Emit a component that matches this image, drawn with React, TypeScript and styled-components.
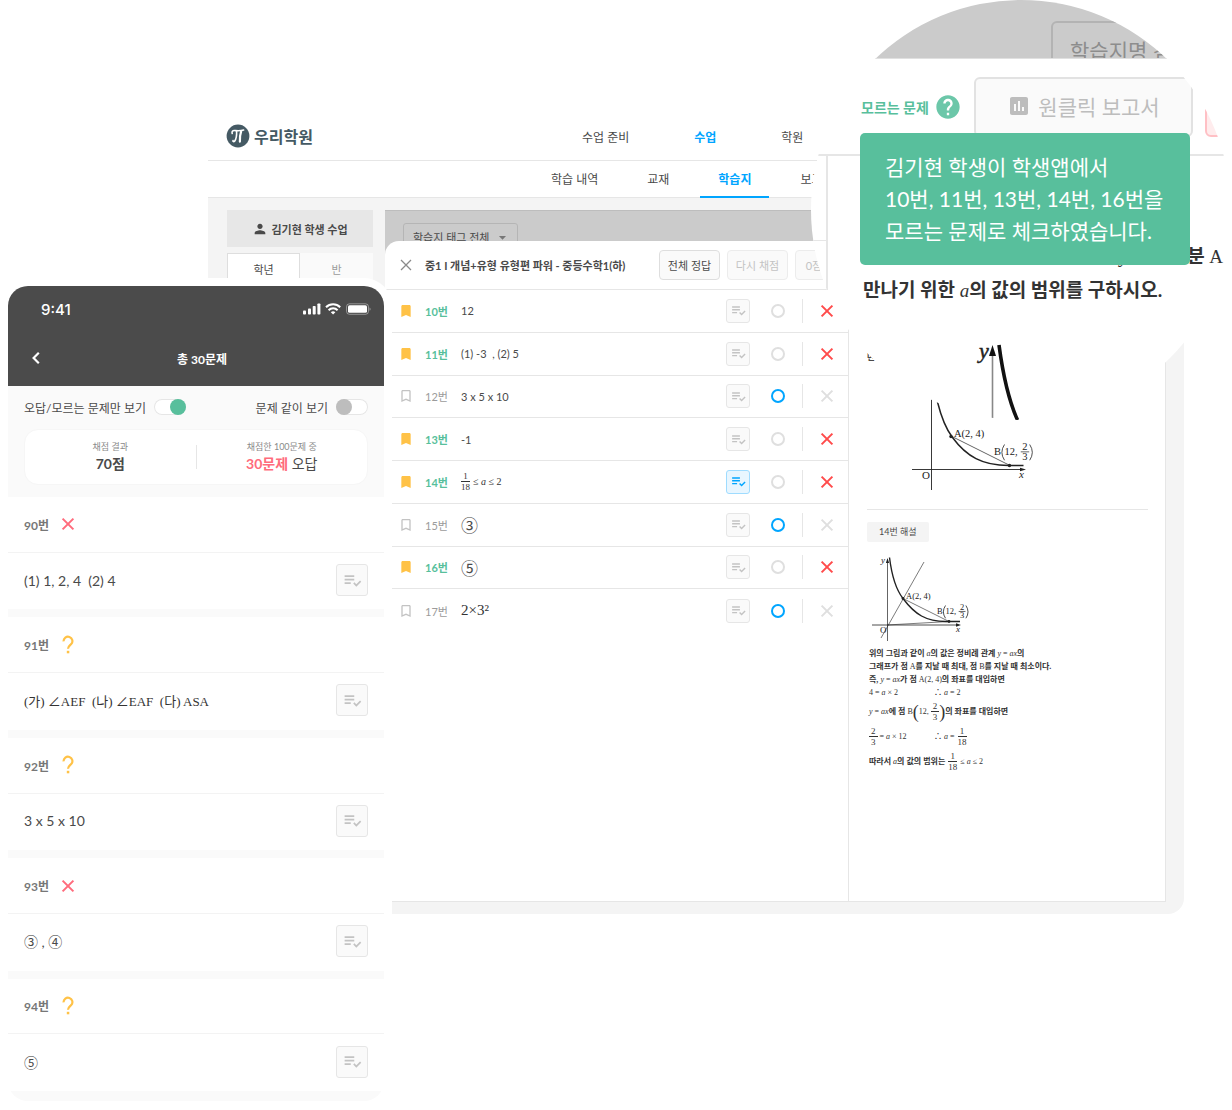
import React from "react";
import styled, { createGlobalStyle, css } from "styled-components";
import {
  MdArrowDropDown,
  MdAssessment,
  MdBookmark,
  MdBookmarkBorder,
  MdHelp,
  MdPerson,
  MdPlaylistAddCheck,
} from "react-icons/md";

const sans = `Lato, "Noto Sans CJK KR", sans-serif`;
const serif = `"Liberation Serif", "Noto Sans CJK KR", serif`;

const color = {
  text: "#4a4a4a",
  muted: "#9b9b9b",
  faint: "#c3c3c3",
  line: "#e6e6e6",
  page: "#f4f4f4",
  soft: "#fafafa",
  dim: "#cbcbcb",
  green: "#58bf9c",
  blue: "#00a5ff",
  red: "#ff4b4b",
  pink: "#ff6b7c",
  yellow: "#ffc247",
  dark: "#4b4b4b",
  brand: "#455a64",
};

const GlobalStyle = createGlobalStyle`
  *, *::before, *::after { box-sizing: border-box; }
  body { margin: 0; background: #fff; color: ${color.text}; font-family: ${sans}; }
  button, select, input { font: inherit; color: inherit; margin: 0; padding: 0; }
  button { cursor: pointer; }
  a { color: inherit; text-decoration: none; }
  h1, h2, h3, p, ul, ol { margin: 0; padding: 0; font-weight: inherit; }
  ul, ol { list-style: none; }
  svg { display: block; flex: none; }
`;

/* The showcase: desktop window, phone and magnifier overlapping each other */

const Showcase = styled.main`
  position: relative;
  display: grid;
  grid-template-columns: 200px 176px minmax(0, 1fr);
  grid-template-rows: 176px auto;
  padding: 110px 48px 9px 8px;
  overflow: hidden;
`;

/* ---------- desktop window ---------- */

const Desktop = styled.section`
  grid-column: 2 / -1;
  grid-row: 1 / 3;
  align-self: start;
  border-bottom-right-radius: 16px;
  background: ${color.page};
  overflow: hidden;
`;

const TopBar = styled.header`
  display: flex;
  align-items: center;
  height: 51px;
  padding-left: 18px;
  padding-top: 2px;
  background: #fff;
  border-bottom: 1px solid ${color.line};
`;

const Brand = styled.a`
  display: flex;
  align-items: center;
  gap: 4px;
  width: 356px;
  font-size: 16px;
  font-weight: 700;
  color: ${color.brand};
`;

const MainNav = styled.nav`
  display: flex;
  gap: 65px;
  font-size: 12px;
  white-space: nowrap;
`;

const NavLink = styled.a<{ $active?: boolean }>`
  ${(p) => p.$active && css`color: ${color.blue}; font-weight: 700;`}
`;

const SubNav = styled.nav`
  display: flex;
  gap: 13px;
  height: 37px;
  padding-left: 325px;
  background: #fff;
  border-bottom: 1px solid ${color.line};
  white-space: nowrap;
`;

const SubLink = styled.a<{ $active?: boolean }>`
  height: 37px;
  padding: 0 18px;
  font-size: 12px;
  line-height: 38px;
  ${(p) => p.$active && css`
    color: ${color.blue};
    font-weight: 700;
    box-shadow: inset 0 -2px ${color.blue};
  `}
`;

const Workspace = styled.div`
  display: flex;
  gap: 12px;
  padding: 12px 18px 12px 19px;
`;

const ClassPanel = styled.aside`
  flex: 0 0 146px;
`;

const ClassTitle = styled.h2`
  display: flex;
  align-items: center;
  justify-content: center;
  gap: 3px;
  height: 37px;
  background: #e7e7e7;
  font-size: 11px;
  font-weight: 700;
`;

const ClassTabs = styled.div`
  display: flex;
  margin-top: 6px;
`;

const ClassTab = styled.button<{ $active?: boolean }>`
  flex: 1;
  height: 30px;
  border: 1px solid ${(p) => (p.$active ? "#dedede" : color.soft)};
  border-bottom: 0;
  background: ${(p) => (p.$active ? "#fff" : color.soft)};
  color: ${(p) => (p.$active ? color.text : color.muted)};
  font-size: 11px;
`;

const Content = styled.div`
  flex: 1;
  min-width: 0;
  background: ${color.dim};
`;

const Filters = styled.div`
  height: 31px;
  padding: 12px 18px 0;
  overflow: hidden;
  border-top: 1px solid #bdbdbd;
`;

const SelectBox = styled.label`
  display: flex;
  align-items: center;
  width: 115px;
  height: 28px;
  padding: 0 6px 0 9px;
  border: 1px solid #b5b5b5;
  border-radius: 3px;
  color: #777;
`;

const TagSelect = styled.select`
  flex: 1;
  width: 0;
  border: 0;
  background: none;
  appearance: none;
  font-size: 11px;
  color: ${color.text};
  outline: 0;
`;

const Dialog = styled.section`
  background: #fff;
  border-top-left-radius: 14px;
`;

const DialogHeader = styled.header`
  display: flex;
  align-items: center;
  gap: 7px;
  height: 49px;
  padding-left: 15px;
  border-bottom: 1px solid ${color.line};
`;

const PlainButton = styled.button`
  display: flex;
  align-items: center;
  justify-content: center;
  border: 0;
  background: none;
`;

const DialogTitle = styled.h1`
  flex: 0 0 233px;
  padding-left: 6px;
  font-size: 11px;
  font-weight: 700;
  white-space: nowrap;
`;

const ActionButton = styled.button<{ $off?: boolean }>`
  width: 61px;
  height: 30px;
  border: 1px solid ${(p) => (p.$off ? "#ececec" : "#dedede")};
  border-radius: 4px;
  background: ${color.soft};
  color: ${(p) => (p.$off ? color.faint : color.text)};
  font-size: 11px;
`;

const DialogBody = styled.div`
  display: grid;
  grid-template-columns: minmax(0, 463fr) minmax(0, 317fr);
  min-height: 612px;
  border-bottom: 1px solid ${color.line};
  border-right: 1px solid ${color.line};
`;

const AnswerList = styled.ol`
  align-self: start;
  display: grid;
  grid-template-rows: repeat(8, 1fr);
  height: 342px;
`;

const AnswerRow = styled.li`
  display: flex;
  align-items: center;
  padding: 0 11px 0 12px;
  font-size: 11px;
  &:not(:last-child) {
    border-bottom: 1px solid ${color.line};
  }
`;

const BookmarkButton = styled(PlainButton)<{ $on: boolean }>`
  width: 17px;
  height: 24px;
  color: ${(p) => (p.$on ? color.yellow : color.faint)};
`;

const RowNumber = styled.span<{ $on: boolean }>`
  width: 36px;
  margin-left: 11px;
  color: ${(p) => (p.$on ? color.green : color.muted)};
  font-weight: ${(p) => (p.$on ? 700 : 400)};
`;

const RowAnswer = styled.span`
  flex: 1;
  min-width: 0;
  white-space: pre;
`;

const NoteButton = styled.button<{ $size: number; $active?: boolean }>`
  display: flex;
  flex: none;
  align-items: center;
  justify-content: center;
  width: ${(p) => p.$size}px;
  height: ${(p) => p.$size}px;
  border: 1px solid ${(p) => (p.$active ? "#9fdcff" : "#e6e6e6")};
  border-radius: 3px;
  background: ${(p) => (p.$active ? "#e8f6ff" : color.soft)};
  color: ${(p) => (p.$active ? color.blue : color.faint)};
`;

const CorrectButton = styled.button<{ $on: boolean }>`
  width: 14px;
  height: 14px;
  margin-left: 21px;
  border: 2px solid ${(p) => (p.$on ? color.blue : "#dfdfdf")};
  border-radius: 50%;
  background: none;
`;

const Divider = styled.span<{ $height: number }>`
  width: 1px;
  height: ${(p) => p.$height}px;
  background: ${color.line};
`;

const WrongGroup = styled.span`
  display: flex;
  align-items: center;
  gap: 14px;
  margin-left: 17px;
`;

const WrongButton = styled(PlainButton)<{ $on: boolean }>`
  width: 20px;
  color: ${(p) => (p.$on ? color.red : "#dfdfdf")};
`;

const Explanation = styled.article`
  padding: 60px 17px 0 18px;
  border-left: 1px solid ${color.line};
`;

const Question = styled.p`
  font-size: 9px;
  line-height: 14px;
  font-weight: 700;
  white-space: nowrap;
`;

const GraphBox = styled.div<{ $top: number; $left: number }>`
  padding-top: ${(p) => p.$top}px;
  padding-left: ${(p) => p.$left}px;
`;

const Rule = styled.hr`
  height: 1px;
  margin: 14px 0 12px;
  border: 0;
  background: ${color.line};
`;

const Chip = styled.h3`
  width: fit-content;
  padding: 0 12px;
  border-radius: 2px;
  background: ${color.page};
  font-size: 9px;
  line-height: 20px;
`;

const Solution = styled.div`
  padding: 3px 0 0 2px;
  color: #333;
  font-family: ${serif};
  font-size: 8px;
  font-weight: 500;
  line-height: 13px;
  white-space: nowrap;
`;

const SolutionLine = styled.p<{ $tall?: boolean; $tight?: boolean }>`
  display: flex;
  align-items: center;
  gap: ${(p) => (p.$tight ? 0 : 3)}px;
  height: ${(p) => (p.$tall ? 25 : 13)}px;
`;

const Ko = styled.b`
  font-weight: 700;
`;

const StepCell = styled.span`
  display: flex;
  align-items: center;
  gap: 2px;
  width: 62px;
`;

const Paren = styled.span`
  font-size: 18px;
  line-height: 20px;
  font-weight: 400;
`;

const FracBox = styled.span`
  display: inline-flex;
  flex-direction: column;
  align-items: center;
  font-size: 9px;
  line-height: 10px;
  & > span:first-child {
    align-self: stretch;
    padding: 0 2px;
    border-bottom: 1px solid currentColor;
    text-align: center;
  }
`;

const MathText = styled.span<{ $size: number }>`
  display: flex;
  align-items: center;
  gap: 3px;
  font-family: ${serif};
  font-size: ${(p) => p.$size}px;
  color: #333;
  white-space: pre;
`;

const Circled = styled.span<{ $size: number }>`
  font-family: "Noto Sans CJK KR", sans-serif;
  font-size: ${(p) => p.$size}px;
`;

/* ---------- phone ---------- */

const Phone = styled.section`
  position: relative;
  grid-column: 1 / 3;
  grid-row: 2;
  align-self: start;
  border-radius: 20px;
  background: #fff;
  box-shadow: 0 0 0 8px #fff;
`;

const PhoneTop = styled.header`
  height: 100px;
  border-radius: 20px 20px 0 0;
  background: ${color.dark};
  color: #fff;
`;

const StatusBar = styled.div`
  display: flex;
  align-items: center;
  justify-content: space-between;
  height: 46px;
  padding: 0 13px 0 33px;
  font-family: Inter, sans-serif;
  font-size: 15px;
  font-weight: 500;
`;

const TitleBar = styled.div`
  display: grid;
  grid-template-columns: 32px 1fr 24px;
  align-items: center;
  height: 52px;
  padding: 0 8px 0 12px;
`;

const PhoneTitle = styled.h2`
  text-align: center;
  font-size: 12px;
  font-weight: 700;
`;

const Summary = styled.div`
  padding: 12px 16px 12px;
  background: ${color.soft};
`;

const Switches = styled.div`
  display: flex;
  justify-content: space-between;
`;

const SwitchLabel = styled.label`
  display: flex;
  align-items: center;
  gap: 8px;
  height: 18px;
  font-size: 12px;
`;

const Switch = styled.input`
  appearance: none;
  width: 32px;
  height: 16px;
  border-radius: 8px;
  background: #fff;
  box-shadow: inset 0 0 0 1px #e6e6e6;
  &::before {
    content: "";
    display: block;
    width: 16px;
    height: 16px;
    border-radius: 50%;
    background: #bdbdbd;
  }
  &:checked::before {
    margin-left: auto;
    background: ${color.green};
  }
`;

const ScoreCard = styled.div`
  display: grid;
  grid-template-columns: 1fr 1px 1fr;
  align-items: center;
  height: 56px;
  margin-top: 13px;
  border: 1px solid #f6f6f6;
  border-radius: 14px;
  background: #fff;
`;

const Score = styled.div`
  text-align: center;
  font-size: 14px;
  line-height: 20px;
`;

const ScoreCaption = styled.p`
  font-size: 9px;
  line-height: 14px;
  color: #8a8a8a;
`;

const WrongCount = styled.b`
  color: ${color.pink};
`;

const ProblemList = styled.ol`
  display: grid;
  grid-template-rows: repeat(5, 1fr);
  height: 602px;
`;

const Problem = styled.li`
  display: flex;
  flex-direction: column;
  border-bottom: 8px solid ${color.soft};
`;

const ProblemHead = styled.div`
  display: flex;
  flex: 1;
  align-items: center;
  gap: 9px;
  padding: 0 16px;
  border-bottom: 1px solid #f3f3f3;
  color: #777;
  font-size: 12px;
  font-weight: 700;
`;

const ProblemBody = styled.div`
  display: flex;
  flex: 1;
  align-items: center;
  justify-content: space-between;
  padding: 0 16px 2px;
  font-size: 14px;
  white-space: pre;
`;

const PhoneFoot = styled.div`
  height: 2px;
  background: ${color.soft};
`;

const PhoneClip = styled.div`
  border-radius: 0 0 20px 20px;
  overflow: hidden;
`;

/* ---------- magnifier ---------- */

const Magnifier = styled.section`
  position: absolute;
  top: 0;
  right: 1px;
  width: 420px;
  height: 420px;
  border-radius: 50%;
  background: #fff;
  overflow: hidden;
`;

const LensBackdrop = styled.div`
  height: 59px;
  padding: 21px 0 0 240px;
  border-bottom: 1px solid #e0e0e0;
  background: ${color.dim};
  overflow: hidden;
`;

const LensSearch = styled.button`
  width: 180px;
  height: 58px;
  padding-left: 17px;
  border: 2px solid #b3b3b3;
  border-radius: 6px;
  background: none;
  color: #8d8d8d;
  font-size: 21px;
  text-align: left;
`;

const LensHeader = styled.div`
  display: flex;
  align-items: center;
  height: 97px;
  padding-left: 50px;
  border-bottom: 2px solid ${color.line};
`;

const LensLabel = styled.span`
  flex: 0 0 73px;
  color: ${color.green};
  font-size: 14px;
  font-weight: 700;
  white-space: nowrap;
`;

const HelpButton = styled(PlainButton)`
  flex: 0 0 28px;
  color: #6cc7a9;
`;

const LensButton = styled.button<{ $danger?: boolean }>`
  display: flex;
  flex: none;
  align-items: center;
  justify-content: center;
  gap: 7px;
  width: 219px;
  height: 60px;
  margin-left: 12px;
  padding-bottom: 2px;
  border: 2px solid ${(p) => (p.$danger ? "#ffc0c5" : "#e2e2e2")};
  border-radius: 6px;
  background: ${(p) => (p.$danger ? "#ffeced" : color.soft)};
  color: #bdbdbd;
  font-size: 21px;
`;

const LensBody = styled.div`
  display: flex;
  height: 264px;
`;

const LensEdge = styled.div`
  flex: 0 0 17px;
  height: 134px;
  border-right: 2px solid ${color.line};
  padding-top: 84px;
  &::before {
    content: "";
    display: block;
    height: 50px;
    border-top: 1px solid ${color.line};
    border-bottom: 1px solid ${color.line};
  }
`;

const LensPage = styled.div`
  padding: 83px 0 0 35px;
  color: #333;
  font-size: 19px;
  font-weight: 700;
  line-height: 33px;
  white-space: nowrap;
`;

const MathVar = styled.i`
  font-family: ${serif};
  font-weight: 400;
`;

const MathCap = styled.span`
  font-family: ${serif};
  font-weight: 400;
`;

const Tooltip = styled.p`
  position: absolute;
  top: 133px;
  left: 49px;
  padding: 18px 25px;
  width: 330px;
  border-radius: 5px;
  background: ${color.green};
  color: #fff;
  font-size: 21px;
  line-height: 32px;
  white-space: nowrap;
`;

/* ---------- drawings ---------- */

const Logo = () => (
  <svg width="24" height="24" viewBox="0 0 24 24" aria-hidden="true">
    <circle cx="12" cy="12" r="11.4" fill={color.brand} />
    <g fill="none" stroke="#fff" strokeLinecap="round" strokeLinejoin="round">
      <path d="M6.200 9.400c-.6-2 .4-3 2.200-2.900 3 .2 5.600.6 9.200-.5" strokeWidth="1.600" />
      <path d="M10.600 7.200c.2 4-.2 7.600-2 10-.8.800-1.800.4-1.600-.6" strokeWidth="1.600" />
      <path d="M15.200 7.200c-1 3-1.600 6.400-1.300 10.400" strokeWidth="2.200" />
    </g>
  </svg>
);

const ThinClose = () => (
  <svg width="12" height="12" viewBox="0 0 12 12" aria-hidden="true">
    <path d="M1 1l10 10M11 1L1 11" stroke="#8a8a8a" strokeWidth="1.300" fill="none" />
  </svg>
);

const WrongMark = ({ tint = "currentColor" }: { tint?: string }) => (
  <svg width="20" height="20" viewBox="0 0 20 20" aria-hidden="true">
    <path d="M4.600 4.600l10.800 10.800M15.400 4.600L4.600 15.400" stroke={tint} strokeWidth="2" fill="none" />
  </svg>
);

const BackIcon = () => (
  <svg width="12" height="14" viewBox="0 0 12 14" aria-hidden="true">
    <path d="M8.800 1.800L3.600 7l5.200 5.200" stroke="#fff" strokeWidth="2.200" fill="none" />
  </svg>
);

const QuestionIcon = () => (
  <svg width="20" height="20" viewBox="0 0 20 20" aria-hidden="true">
    <path d="M5.600 6.400a4.400 4.400 0 1 1 7.600 2.700c-1.400 1.500-3.200 2.200-3.200 4.700" stroke={color.yellow} strokeWidth="2.200" fill="none" />
    <rect x="8.800" y="15.800" width="2.500" height="2.500" fill={color.yellow} />
  </svg>
);

const StatusIcons = () => (
  <svg width="68" height="14" viewBox="0 0 68 14" fill="#fff" aria-hidden="true">
    <rect x="0" y="8.500" width="3" height="4" rx="0.800" />
    <rect x="5" y="6.500" width="3" height="6" rx="0.800" />
    <rect x="9.700" y="4" width="3" height="8.500" rx="0.800" />
    <rect x="14.400" y="1.500" width="3" height="11" rx="0.800" />
    <g fill="none" stroke="#fff" strokeWidth="2">
      <path d="M23 5.200a10.200 10.200 0 0 1 14.200 0" />
      <path d="M25.600 8.200a6.400 6.400 0 0 1 9 0" />
    </g>
    <path d="M27.800 10.200a3.400 3.400 0 0 1 4.600 0l-2.300 2.400z" />
    <rect x="43.500" y="1.800" width="22" height="10.500" rx="3" fill="none" stroke="#fff" strokeOpacity="0.400" />
    <rect x="45" y="3.300" width="19" height="7.500" rx="1.600" />
    <path d="M66.500 5.400v3.400c.8-.3 1.200-1 1.200-1.700s-.4-1.400-1.200-1.700z" opacity="0.400" />
  </svg>
);

const PointLabels = ({ ax, ay, bx, by, size }: { ax: number; ay: number; bx: number; by: number; size: number }) => (
  <g fontFamily="Liberation Serif, serif" fontSize={size} fill="#222">
    <text x={ax} y={ay}>A(2, 4)</text>
    <text x={bx} y={by}>B</text>
    <text x={bx + size} y={by}>12,</text>
    <text x={bx + size * 2.7} y={by - size * 0.45}>2</text>
    <text x={bx + size * 2.7} y={by + size * 0.5}>3</text>
    <path
      d={`M${bx + size * 2.55} ${by - size * 0.3}h${size * 0.8}`}
      stroke="#222"
      strokeWidth="0.700"
    />
    <path
      d={`M${bx + size} ${by - size}q${-size * 0.5} ${size * 0.75} 0 ${size * 1.5}M${bx + size * 3.4} ${by - size}q${size * 0.5} ${size * 0.75} 0 ${size * 1.5}`}
      stroke="#222"
      strokeWidth="0.800"
      fill="none"
    />
  </g>
);

const QuestionGraph = () => (
  <svg width="130" height="100" viewBox="910 395 130 100" role="img" aria-label="점 A와 점 B를 지나는 그래프">
    <g fill="none" stroke="#222">
      <path d="M931.500 399v91" strokeWidth="0.900" />
      <path d="M912 469.500h110" strokeWidth="0.900" />
      <path d="M937.500 402c5 20 10 29 15 35.500 14 19 30 28 56 28h15" strokeWidth="1.500" />
      <path d="M951 436l59 29.500" strokeWidth="0.700" />
    </g>
    <path d="M1026 469.500l-6-1.800v3.600z" fill="#222" />
    <circle cx="951" cy="436.500" r="1.700" fill="#222" />
    <circle cx="1009.500" cy="465.500" r="1.700" fill="#222" />
    <PointLabels ax={954} ay={437} bx={994} by={455} size={10.5} />
    <g fontFamily="Liberation Serif, serif" fontSize="11" fill="#222">
      <text x="922" y="479">O</text>
      <text x="1019" y="478" fontStyle="italic">x</text>
    </g>
  </svg>
);

const SolutionGraph = () => (
  <svg width="110" height="92" viewBox="868 552 110 92" role="img" aria-label="직선이 함께 그려진 풀이 그래프">
    <g fill="none" stroke="#222">
      <path d="M887.500 560v81" strokeWidth="0.700" />
      <path d="M872 625h86" strokeWidth="0.800" />
      <path d="M889.500 557.500c3 24 8 34 13.500 41 12 16 23 23 43 23h14" strokeWidth="1.400" />
      <path d="M881 638l43-76" strokeWidth="0.600" />
      <path d="M903 598.500l46 23M887 625l62-3.500" strokeWidth="0.600" />
    </g>
    <path d="M887.500 558l-1.600 5h3.200zM961 625l-5-1.700v3.400z" fill="#222" />
    <circle cx="903" cy="598.500" r="1.400" fill="#222" />
    <circle cx="949" cy="621.500" r="1.400" fill="#222" />
    <PointLabels ax={906} ay={599} bx={937} by={614} size={8.5} />
    <g fontFamily="Liberation Serif, serif" fontSize="9" fill="#222">
      <text x="881" y="563" fontStyle="italic">y</text>
      <text x="880" y="633">O</text>
      <text x="956" y="632" fontStyle="italic">x</text>
    </g>
  </svg>
);

const LensGraph = () => (
  <svg width="60" height="90" viewBox="972 336 60 90" aria-hidden="true">
    <text x="979" y="357" fontFamily="Liberation Serif, serif" fontStyle="italic" fontWeight="400" fontSize="22" fill="#222" stroke="#222" strokeWidth="0.500">y</text>
    <path d="M992.500 350v67" stroke="#888" strokeWidth="1.600" />
    <path d="M992.500 344l-3.500 11h7z" fill="#111" />
    <path d="M999 344c4 30 9 54 18.500 75" stroke="#111" strokeWidth="3.600" fill="none" />
  </svg>
);

const Frac = ({ top, bottom }: { top: string; bottom: string }) => (
  <FracBox>
    <span>{top}</span>
    <span>{bottom}</span>
  </FracBox>
);

/* ---------- data ---------- */

type Answer = { no: number; body: React.ReactNode; unknown: boolean; noteOpen?: boolean };

const answers: Answer[] = [
  { no: 10, body: "12", unknown: true },
  { no: 11, body: "(1) -3  , (2) 5", unknown: true },
  { no: 12, body: "3 x 5 x 10", unknown: false },
  { no: 13, body: "-1", unknown: true },
  {
    no: 14,
    body: (
      <MathText $size={10}>
        <Frac top="1" bottom="18" />
        <span>≤ <i>a</i> ≤ 2</span>
      </MathText>
    ),
    unknown: true,
    noteOpen: true,
  },
  { no: 15, body: <Circled $size={17}>③</Circled>, unknown: false },
  { no: 16, body: <Circled $size={17}>⑤</Circled>, unknown: true },
  { no: 17, body: <MathText $size={15}><span>2×3²</span></MathText>, unknown: false },
];

const problems: { no: number; state: "wrong" | "unknown"; body: React.ReactNode }[] = [
  { no: 90, state: "wrong", body: "(1) 1, 2, 4  (2) 4" },
  { no: 91, state: "unknown", body: <MathText $size={13}>{"(가) ∠AEF  (나) ∠EAF  (다) ASA"}</MathText> },
  { no: 92, state: "unknown", body: "3 x 5 x 10" },
  { no: 93, state: "wrong", body: <span><Circled $size={14}>③</Circled> , <Circled $size={14}>④</Circled></span> },
  { no: 94, state: "unknown", body: <Circled $size={14}>⑤</Circled> },
];

const mainLinks = ["수업 준비", "수업", "학원"];
const subLinks = ["학습 내역", "교재", "학습지", "보고서"];

/* ---------- sections ---------- */

const DesktopWindow = () => (
  <Desktop>
    <TopBar>
      <Brand href="#home"><Logo />우리학원</Brand>
      <MainNav>
        {mainLinks.map((t) => <NavLink key={t} href="#nav" $active={t === "수업"}>{t}</NavLink>)}
      </MainNav>
    </TopBar>
    <SubNav>
      {subLinks.map((t) => <SubLink key={t} href="#sub" $active={t === "학습지"}>{t}</SubLink>)}
    </SubNav>
    <Workspace>
      <ClassPanel>
        <ClassTitle><MdPerson size={16} />김기현 학생 수업</ClassTitle>
        <ClassTabs>
          <ClassTab $active>학년</ClassTab>
          <ClassTab>반</ClassTab>
        </ClassTabs>
      </ClassPanel>
      <Content>
        <Filters>
          <SelectBox>
            <TagSelect aria-label="학습지 태그" defaultValue="all">
              <option value="all">학습지 태그 전체</option>
            </TagSelect>
            <MdArrowDropDown size={17} />
          </SelectBox>
        </Filters>
        <Dialog>
          <DialogHeader>
            <PlainButton aria-label="닫기"><ThinClose /></PlainButton>
            <DialogTitle>중1 I 개념+유형 유형편 파워 - 중등수학1(하)</DialogTitle>
            <ActionButton>전체 정답</ActionButton>
            <ActionButton $off>다시 채점</ActionButton>
            <ActionButton $off>0점 처리</ActionButton>
          </DialogHeader>
          <DialogBody>
            <AnswerList>
              {answers.map((a) => (
                <AnswerRow key={a.no}>
                  <BookmarkButton $on={a.unknown} aria-label="모르는 문제 표시">
                    {a.unknown ? <MdBookmark size={16} /> : <MdBookmarkBorder size={16} />}
                  </BookmarkButton>
                  <RowNumber $on={a.unknown}>{a.no}번</RowNumber>
                  <RowAnswer>{a.body}</RowAnswer>
                  <NoteButton $size={24} $active={a.noteOpen} aria-label="해설 보기">
                    <MdPlaylistAddCheck size={17} />
                  </NoteButton>
                  <CorrectButton $on={!a.unknown} aria-label="정답" />
                  <WrongGroup>
                    <Divider $height={24} />
                    <WrongButton $on={a.unknown} aria-label="오답"><WrongMark /></WrongButton>
                  </WrongGroup>
                </AnswerRow>
              ))}
            </AnswerList>
            <Explanation>
              <Question>만</Question>
              <GraphBox $top={31} $left={43}><QuestionGraph /></GraphBox>
              <Rule />
              <Chip>14번 해설</Chip>
              <GraphBox $top={10} $left={1}><SolutionGraph /></GraphBox>
              <Solution>
                <p><Ko>위의 그림과 같이 </Ko><i>a</i><Ko>의 값은 정비례 관계 </Ko><i>y</i> = <i>ax</i><Ko>의</Ko></p>
                <p><Ko>그래프가 점 </Ko>A<Ko>를 지날 때 최대, 점 </Ko>B<Ko>를 지날 때 최소이다.</Ko></p>
                <p><Ko>즉, </Ko><i>y</i> = <i>ax</i><Ko>가 점 </Ko>A(2, 4)<Ko>의 좌표를 대입하면</Ko></p>
                <SolutionLine><StepCell><span>4 = <i>a</i> × 2</span></StepCell><span>∴ <i>a</i> = 2</span></SolutionLine>
                <SolutionLine $tall $tight>
                  <span><i>y</i> = <i>ax</i><Ko>에 점 </Ko>B</span>
                  <Paren>(</Paren>12,&nbsp;<Frac top="2" bottom="3" /><Paren>)</Paren>
                  <Ko>의 좌표를 대입하면</Ko>
                </SolutionLine>
                <SolutionLine $tall>
                  <StepCell><Frac top="2" bottom="3" /><span>= <i>a</i> × 12</span></StepCell>
                  <span>∴ <i>a</i> =</span><Frac top="1" bottom="18" />
                </SolutionLine>
                <SolutionLine $tall>
                  <span><Ko>따라서 </Ko><i>a</i><Ko>의 값의 범위는</Ko></span>
                  <Frac top="1" bottom="18" />
                  <span>≤ <i>a</i> ≤ 2</span>
                </SolutionLine>
              </Solution>
            </Explanation>
          </DialogBody>
        </Dialog>
      </Content>
    </Workspace>
  </Desktop>
);

const PhoneApp = () => (
  <Phone>
    <PhoneTop>
      <StatusBar><span>9:41</span><StatusIcons /></StatusBar>
      <TitleBar>
        <PlainButton aria-label="뒤로"><BackIcon /></PlainButton>
        <PhoneTitle>총 30문제</PhoneTitle>
      </TitleBar>
    </PhoneTop>
    <Summary>
      <Switches>
        <SwitchLabel>오답/모르는 문제만 보기<Switch type="checkbox" defaultChecked /></SwitchLabel>
        <SwitchLabel>문제 같이 보기<Switch type="checkbox" /></SwitchLabel>
      </Switches>
      <ScoreCard>
        <Score><ScoreCaption>채점 결과</ScoreCaption><b>70점</b></Score>
        <Divider $height={24} />
        <Score><ScoreCaption>채점한 100문제 중</ScoreCaption><WrongCount>30문제</WrongCount> 오답</Score>
      </ScoreCard>
    </Summary>
    <PhoneClip>
      <ProblemList>
        {problems.map((p) => (
          <Problem key={p.no}>
            <ProblemHead>
              {p.no}번
              {p.state === "wrong" ? <WrongMark tint={color.pink} /> : <QuestionIcon />}
            </ProblemHead>
            <ProblemBody>
              {p.body}
              <NoteButton $size={32} aria-label="해설 보기"><MdPlaylistAddCheck size={21} /></NoteButton>
            </ProblemBody>
          </Problem>
        ))}
      </ProblemList>
      <PhoneFoot />
    </PhoneClip>
  </Phone>
);

const Lens = () => (
  <Magnifier>
    <LensBackdrop><LensSearch>학습지명 검색</LensSearch></LensBackdrop>
    <LensHeader>
      <LensLabel>모르는 문제</LensLabel>
      <HelpButton aria-label="도움말"><MdHelp size={28} /></HelpButton>
      <LensButton><MdAssessment size={24} />원클릭 보고서</LensButton>
      <LensButton $danger aria-label="삭제" />
    </LensHeader>
    <LensBody>
      <LensEdge />
      <LensPage>
        <p>다음 직선이 제1사분면에서 직선 <MathVar>y</MathVar>=<MathVar>x</MathVar>가 선분 <MathCap>A</MathCap></p>
        <p>만나기 위한 <MathVar>a</MathVar>의 값의 범위를 구하시오.</p>
        <GraphBox $top={30} $left={109}><LensGraph /></GraphBox>
      </LensPage>
    </LensBody>
    <Tooltip>
      김기현 학생이 학생앱에서<br />10번, 11번, 13번, 14번, 16번을<br />모르는 문제로 체크하였습니다.
    </Tooltip>
  </Magnifier>
);

export default function App() {
  return (
    <>
      <GlobalStyle />
      <Showcase>
        <DesktopWindow />
        <PhoneApp />
        <Lens />
      </Showcase>
    </>
  );
}
